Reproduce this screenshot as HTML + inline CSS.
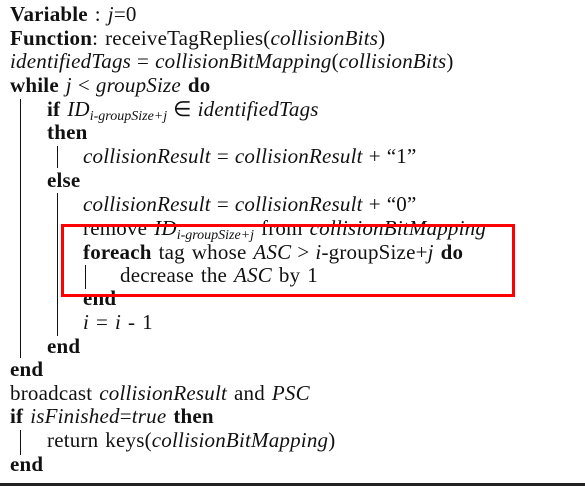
<!DOCTYPE html>
<html><head><style>
body{margin:0;width:585px;height:486px;background:#fff;position:relative;overflow:hidden;font-family:"Liberation Serif",serif;font-size:21px;word-spacing:1.5px;letter-spacing:0.2px;color:#111}
.l{position:absolute;white-space:nowrap;line-height:24px;height:24px}
b{font-weight:bold}
sub{font-size:14px;vertical-align:-4px;line-height:0;word-spacing:0;letter-spacing:0}
.m{display:inline-block;margin:0 6px}
.v{position:absolute;width:1.3px;background:#111}
</style></head><body>
<div class="l" style="left:10px;top:2px"><b>Variable</b> : <i>j</i>=0</div>
<div class="l" style="left:10px;top:26px"><b>Function</b>: receiveTagReplies(<i>collisionBits</i>)</div>
<div class="l" style="left:10px;top:49px"><i>identifiedTags</i><span class="m">=</span><i>collisionBitMapping</i>(<i>collisionBits</i>)</div>
<div class="l" style="left:10px;top:73px"><b>while</b> <i>j</i><span class="m">&lt;</span><i>groupSize</i> <b>do</b></div>
<div class="l" style="left:47px;top:97px"><b>if</b> <i>ID<sub>i-groupSize+j</sub></i><span class="m">∈</span><i>identifiedTags</i></div>
<div class="l" style="left:47px;top:120px"><b>then</b></div>
<div class="l" style="left:83px;top:144px"><i>collisionResult</i><span class="m">=</span><i>collisionResult</i><span class="m">+</span>“1”</div>
<div class="l" style="left:47px;top:168px"><b>else</b></div>
<div class="l" style="left:83px;top:192px"><i>collisionResult</i><span class="m">=</span><i>collisionResult</i><span class="m">+</span>“0”</div>
<div class="l" style="left:83px;top:216px">remove <i>ID<sub>i-groupSize+j</sub></i> from <i>collisionBitMapping</i></div>
<div class="l" style="left:83px;top:240px"><b>foreach</b> tag whose <i>ASC</i><span class="m">&gt;</span><i>i</i>-groupSize+<i>j</i> <b>do</b></div>
<div class="l" style="left:120px;top:263px">decrease the <i>ASC</i> by 1</div>
<div class="l" style="left:83px;top:286px"><b>end</b></div>
<div class="l" style="left:83px;top:310px"><i>i</i> = <i>i</i> - 1</div>
<div class="l" style="left:47px;top:334px"><b>end</b></div>
<div class="l" style="left:10px;top:357px"><b>end</b></div>
<div class="l" style="left:10px;top:381px">broadcast <i>collisionResult</i> and <i>PSC</i></div>
<div class="l" style="left:10px;top:404px"><b>if</b> <i>isFinished</i>=<i>true</i> <b>then</b></div>
<div class="l" style="left:47px;top:428px">return keys(<i>collisionBitMapping</i>)</div>
<div class="l" style="left:10px;top:452px"><b>end</b></div>
<div class="v" style="left:20px;top:99px;height:259px"></div>
<div class="v" style="left:57px;top:146px;height:22px"></div>
<div class="v" style="left:57px;top:193px;height:143px"></div>
<div class="v" style="left:85px;top:265px;height:24px"></div>
<div class="v" style="left:20px;top:430px;height:25px"></div>
<div style="position:absolute;left:61px;top:224px;width:448px;height:67px;border:3px solid #f00"></div>
<div style="position:absolute;left:0;top:483px;width:585px;height:3px;background:#222"></div>
</body></html>
